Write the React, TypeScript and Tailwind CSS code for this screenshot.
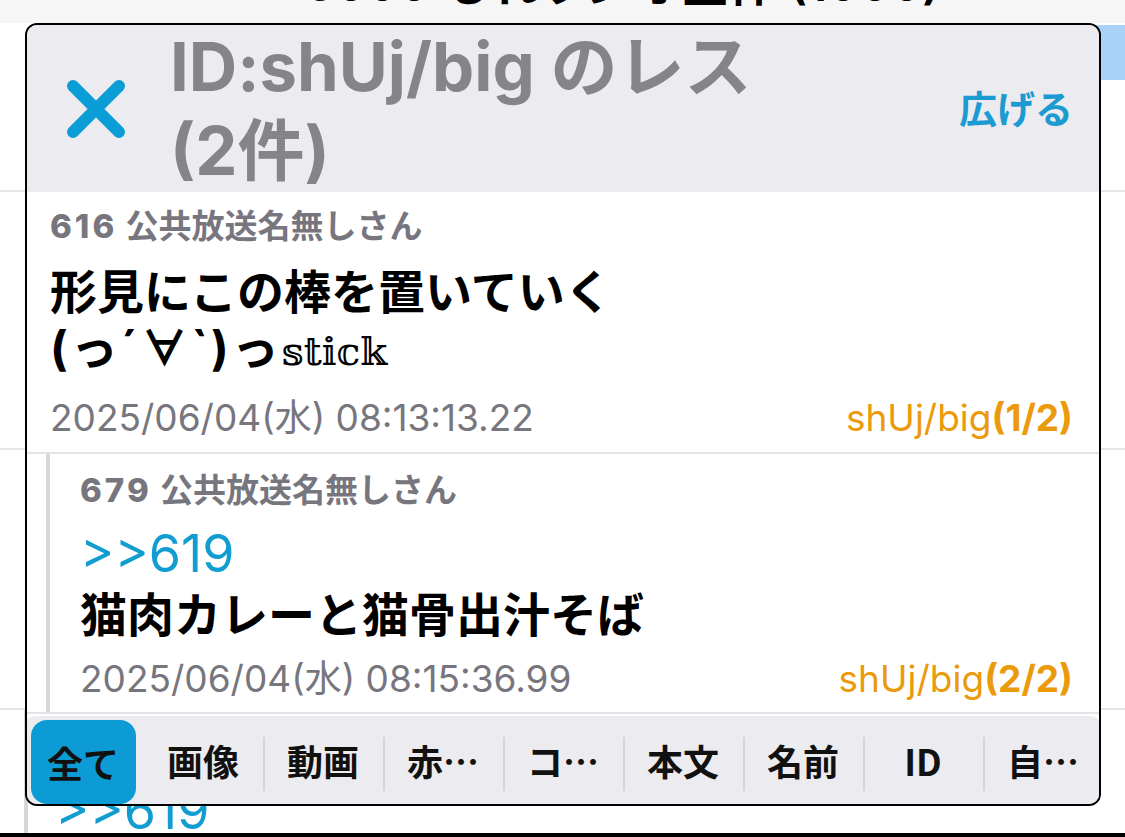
import React from "react";

const tabs = ["全て", "画像", "動画", "赤…", "コ…", "本文", "名前", "ID", "自…"];

function XIcon() {
  return (
    <svg width="64" height="64" viewBox="0 0 64 64" fill="none">
      <path d="M9 9 L55 55 M55 9 L9 55" stroke="#0b9dd5" strokeWidth="12" strokeLinecap="round" />
    </svg>
  );
}

export default function App() {
  return (
    <div className="relative w-[1125px] h-[837px] overflow-hidden bg-white font-['Inter','Noto_Sans_CJK_JP',sans-serif]">
      {/* background thread */}
      <div className="flex flex-col h-full">
        <div className="h-[23px] shrink-0 bg-[#f6f6f7] overflow-hidden flex justify-center">
          <div className="mt-[-40px] text-[48px] leading-[48px] font-semibold text-black whitespace-nowrap pl-[120px]">
            5000 もれラジオ全体 (1000)
          </div>
        </div>
        <div className="h-[167px] shrink-0 flex justify-end items-start">
          <div className="mt-[2px] w-[30px] h-[55px] bg-[#a9d2f8]" />
        </div>
        <div className="h-[2px] shrink-0 bg-[#e6e6e8]" />
        <div className="h-[256px] shrink-0" />
        <div className="h-[2px] shrink-0 bg-[#e6e6e8]" />
        <div className="h-[258px] shrink-0" />
        <div className="h-[2px] shrink-0 bg-[#e6e6e8]" />
        <div className="flex-1 overflow-hidden pl-[24px]">
          <div className="h-full border-l-4 border-[#d6d6db] pl-[27px] flex items-end">
            <div className="text-[52px] leading-[56px] text-[#129dd0] mb-[-6px]">&gt;&gt;619</div>
          </div>
        </div>
        <div className="h-[4px] shrink-0 bg-black" />
      </div>

      {/* popup */}
      <div className="absolute left-[25px] top-[23px] w-[1076px] h-[783px] border-2 border-black rounded-[12px] bg-white overflow-hidden flex flex-col">
        {/* header */}
        <div className="h-[167px] shrink-0 bg-[#ececf0] flex items-center">
          <div className="w-[143px] shrink-0 pl-[37px] flex items-center">
            <XIcon />
          </div>
          <div className="flex-1 text-[67px] leading-[84px] font-bold text-[#858489] whitespace-nowrap">
            ID:shUj/big のレス
            <br />
            (2件)
          </div>
          <div className="pr-[26px] text-[38px] leading-[44px] font-semibold text-[#1b9bd1]">広げる</div>
        </div>

        {/* post 1 */}
        <div className="shrink-0 pl-[23px] pr-[26px] pt-[14px] pb-[14px]">
          <div className="text-[33px] leading-[40px] font-semibold text-[#77767e]">
            <span className="font-extrabold tracking-[3px]">616</span> 公共放送名無しさん
          </div>
          <div className="mt-[18px] text-[47px] leading-[56px] font-bold text-black">
            形見にこの棒を置いていく
            <br />
            <span className="tracking-[3px]">(っ´∀`)っ</span>
            <span className="font-normal text-[39px] font-['DejaVu_Serif','DejaVu_Sans',serif]">𝕤𝕥𝕚𝕔𝕜</span>
          </div>
          <div className="mt-[18px] flex justify-between text-[37px] leading-[40px]">
            <span className="text-[#77767e]">2025/06/04(水) 08:13:13.22</span>
            <span className="text-[#eb9a0c]">
              shUj/big<span className="font-bold">(1/2)</span>
            </span>
          </div>
        </div>
        <div className="h-[2px] shrink-0 bg-[#e4e4e6]" />

        {/* post 2 */}
        <div className="shrink-0 pl-[19px]">
          <div className="border-l-4 border-[#d6d6db] pl-[30px] pr-[26px] pt-[16px] pb-[13px]">
            <div className="text-[33px] leading-[40px] font-semibold text-[#77767e]">
              <span className="font-extrabold tracking-[3px]">679</span> 公共放送名無しさん
            </div>
            <div className="mt-[16px] text-[52px] leading-[56px] text-[#129dd0]">&gt;&gt;619</div>
            <div className="mt-[5px] text-[47px] leading-[56px] font-bold text-black">猫肉カレーと猫骨出汁そば</div>
            <div className="mt-[16px] flex justify-between text-[37px] leading-[40px]">
              <span className="text-[#77767e]">2025/06/04(水) 08:15:36.99</span>
              <span className="text-[#eb9a0c]">
                shUj/big<span className="font-bold">(2/2)</span>
              </span>
            </div>
          </div>
        </div>
        <div className="h-[2px] shrink-0 bg-[#e4e4e6]" />

        {/* tab bar */}
        <div className="mt-[2px] flex-1 bg-[#ececf0] rounded-t-[14px] flex items-center ml-[-4px] mr-[-4px]">
          {tabs.map((t, i) => (
            <div key={t} className="relative w-[120px] shrink-0 h-full flex items-center justify-center">
              {i >= 2 && <div className="absolute left-0 top-[21px] w-[2px] h-[54px] bg-[#d4d4d8]" />}
              <div
                className={
                  i === 0
                    ? "w-[105px] h-[84px] mt-[4px] rounded-[16px] bg-[#0c9bd4] flex items-center justify-center"
                    : "flex items-center justify-center"
                }
              >
                <span className="text-[36px] leading-[44px] font-bold text-[#111] font-['Noto_Sans_CJK_JP','Inter',sans-serif]">
                  {t}
                </span>
              </div>
            </div>
          ))}
        </div>
      </div>
    </div>
  );
}
